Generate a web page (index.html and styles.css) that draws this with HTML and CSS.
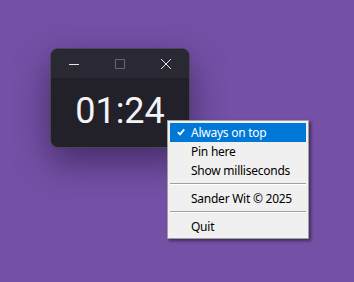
FILE: index.html
```html
<!DOCTYPE html>
<html lang="en">
<head>
  <meta charset="UTF-8" />
  <meta name="viewport" content="width=device-width, initial-scale=1.0"/>
  <title>Clock</title>
  <link rel="stylesheet" href="styles.css">
</head>
<body>
  <div class="desktop">
    <div class="clock-window">
      <div class="titlebar">
        <span class="tb-btn">
          <svg width="10" height="10" viewBox="0 0 10 10"><path d="M0 5.5h10" stroke="#e6e6e6" stroke-width="1"/></svg>
        </span>
        <span class="tb-btn">
          <svg width="10" height="10" viewBox="0 0 10 10"><rect x="0.5" y="0.5" width="9" height="9" fill="none" stroke="#66646c" stroke-width="1"/></svg>
        </span>
        <span class="tb-btn">
          <svg width="10" height="10" viewBox="0 0 10 10"><path d="M0 0L10 10M10 0L0 10" stroke="#e6e6e6" stroke-width="1"/></svg>
        </span>
      </div>
      <div class="clock-face">01:24</div>
    </div>

    <!-- menú contextual -->
    <ul class="context-menu">
      <li class="item active">
        <svg class="check" width="8" height="8" viewBox="0 0 8 8"><path d="M0.8 4.2L3 6.4L7.2 1.4" fill="none" stroke="#fff" stroke-width="1.7"/></svg>
        Always on top
      </li>
      <li class="item">Pin here</li>
      <li class="item">Show milliseconds</li>
      <li class="sep"></li>
      <li class="item">Sander Wit &copy; 2025</li>
      <li class="sep"></li>
      <li class="item">Quit</li>
    </ul>
  </div>
</body>
</html>
```

FILE: styles.css
```css
body {
  margin: 0;
  background-color: #7450a6;
  font-family: 'Noto Sans', 'Liberation Sans', sans-serif;
}

.desktop {
  position: relative;
  width: 354px;
  height: 282px;
  padding: 48px 0 0 50px;
  box-sizing: border-box;
}

.clock-window {
  width: 140px;
  height: 100px;
  box-sizing: border-box;
  background-color: #222029;
  border: 1px solid #4a4654;
  border-radius: 8px;
  overflow: hidden;
  display: flex;
  flex-direction: column;
  box-shadow: 0 14px 34px rgba(20, 10, 40, 0.5);
}

.titlebar {
  height: 29px;
  background-color: #2a2832;
  display: flex;
  justify-content: flex-end;
}

.tb-btn {
  width: 46px;
  display: flex;
  align-items: center;
  justify-content: center;
}

.clock-face {
  flex: 1;
  display: flex;
  align-items: center;
  justify-content: center;
  color: #f4f4f6;
  font-family: Roboto, 'Noto Sans', sans-serif;
  font-size: 36px;
  padding-bottom: 4px;
}

.context-menu {
  position: absolute;
  left: 167px;
  top: 120px;
  width: 142px;
  margin: 0;
  padding: 2px;
  list-style: none;
  box-sizing: border-box;
  background-color: #f0f0f0;
  border: 1px solid #a0a0a0;
  box-shadow: 2px 2px 3px rgba(0, 0, 0, 0.45);
  font-size: 12px;
  letter-spacing: -0.25px;
  color: #000;
}

.item {
  height: 19px;
  line-height: 19px;
  padding-left: 21px;
  position: relative;
  white-space: nowrap;
}

.item.active {
  background-color: #0078d7;
  color: #fff;
}

.check {
  position: absolute;
  left: 7px;
  top: 5px;
}

.sep {
  height: 9px;
  display: flex;
  align-items: center;
}

.sep::before {
  content: "";
  display: block;
  width: 100%;
  height: 1px;
  background-color: #a0a0a0;
  margin-top: -2px;
  border-bottom: 1px solid #fff;
}
```
